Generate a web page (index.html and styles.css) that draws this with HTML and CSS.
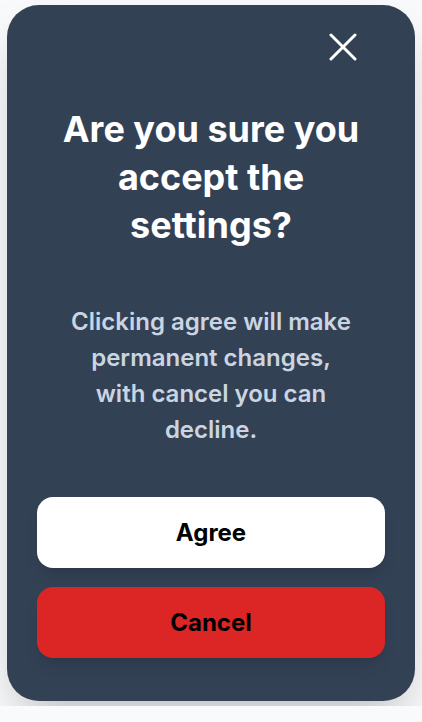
FILE: index.html
```html
<!DOCTYPE html>
<html lang="en">
<head>
<meta charset="utf-8">
<title>Confirm settings</title>
<link rel="stylesheet" href="styles.css">
</head>
<body>
<div class="page">
  <div class="card">
    <div class="card-head">
      <button class="close" aria-label="Close">
        <svg width="28" height="28" viewBox="0 0 28 28" fill="none" stroke="#ffffff" stroke-width="3" stroke-linecap="round">
          <path d="M2 2 L26 26 M26 2 L2 26"/>
        </svg>
      </button>
    </div>
    <h1 class="title">Are you sure you accept the settings?</h1>
    <p class="text">Clicking agree will make permanent changes, with cancel you can decline.</p>
    <div class="actions">
      <button class="btn btn-agree">Agree</button>
      <button class="btn btn-cancel">Cancel</button>
    </div>
  </div>
</div>
</body>
</html>
```
FILE: styles.css
```css
* { box-sizing: border-box; }
html, body { margin: 0; padding: 0; }
body {
  background: #f9fafb;
  font-family: Inter, "Noto Sans", sans-serif;
}
.page {
  padding: 5px 7px;
}
.card {
  width: 408px;
  height: 696px;
  background: #334155;
  border-radius: 32px;
  padding: 28px 30px 0;
  box-shadow: 0 25px 50px -12px rgba(0,0,0,0.25);
  display: flex;
  flex-direction: column;
}
.card-head {
  display: flex;
  justify-content: flex-end;
  padding-right: 28px;
}
.close {
  background: none;
  border: 0;
  padding: 0;
  width: 28px;
  height: 28px;
  display: block;
  cursor: pointer;
}
.close svg { display: block; }
.title {
  margin: 44px 0 0;
  color: #ffffff;
  font-size: 36px;
  font-weight: 700;
  line-height: 48px;
  text-align: center;
  padding: 0 20px;
}
.text {
  margin: 55px 0 0;
  color: #cbd5e1;
  font-size: 24px;
  font-weight: 600;
  line-height: 36px;
  text-align: center;
  padding: 0 32px;
}
.actions {
  margin-top: 49px;
  display: flex;
  flex-direction: column;
  gap: 19px;
}
.btn {
  height: 71px;
  border: 0;
  border-radius: 16px;
  font-family: Inter, "Noto Sans", sans-serif;
  font-size: 24px;
  font-weight: 700;
  color: #000000;
  box-shadow: 0 10px 15px -3px rgba(0,0,0,0.1), 0 4px 6px -4px rgba(0,0,0,0.1);
}
.btn-agree { background: #ffffff; }
.btn-cancel { background: #dc2626; }
```
